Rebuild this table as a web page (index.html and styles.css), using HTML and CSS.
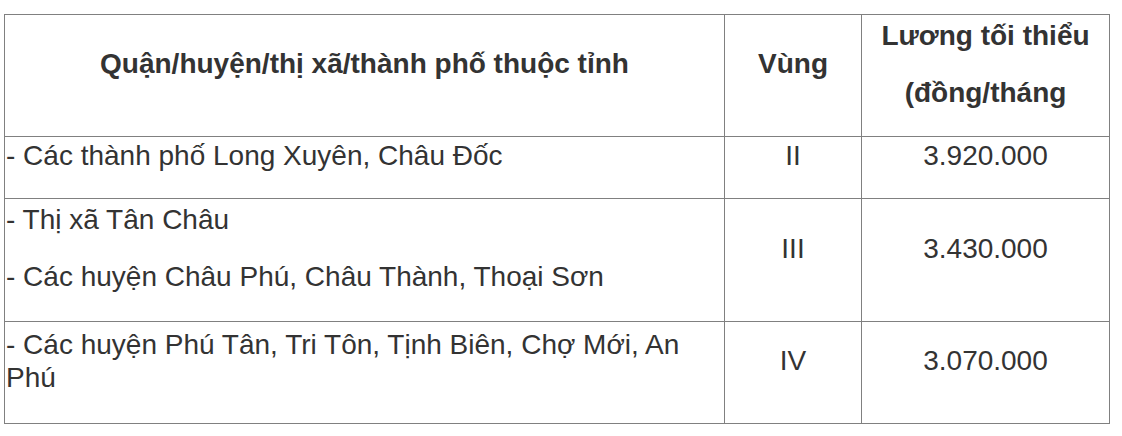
FILE: index.html
```html
<!DOCTYPE html>
<html lang="vi">
<head>
<meta charset="utf-8">
<title>Lương tối thiểu vùng</title>
<link rel="stylesheet" href="styles.css">
</head>
<body>
<div class="wrap">
<table class="wage">
<colgroup>
<col class="c1"><col class="c2"><col class="c3">
</colgroup>
<thead>
<tr class="r-head">
<th><p>Quận/huyện/thị xã/thành phố thuộc tỉnh</p></th>
<th><p>Vùng</p></th>
<th><p>Lương tối thiểu</p><p>(đồng/tháng</p></th>
</tr>
</thead>
<tbody>
<tr class="r1">
<td class="name"><p>- Các thành phố Long Xuyên, Châu Đốc</p></td>
<td class="mid"><p>II</p></td>
<td class="mid"><p>3.920.000</p></td>
</tr>
<tr class="r2">
<td class="name"><p>- Thị xã Tân Châu</p><p>- Các huyện Châu Phú, Châu Thành, Thoại Sơn</p></td>
<td class="mid"><p>III</p></td>
<td class="mid"><p>3.430.000</p></td>
</tr>
<tr class="r3">
<td class="name"><p>- Các huyện Phú Tân, Tri Tôn, Tịnh Biên, Chợ Mới, An Phú</p></td>
<td class="mid"><p>IV</p></td>
<td class="mid"><p>3.070.000</p></td>
</tr>
</tbody>
</table>
</div>
</body>
</html>
```
FILE: styles.css
```css
html, body {
  margin: 0;
  padding: 0;
  background: #ffffff;
}
.wrap {
  padding: 14px 0 0 4px;
}
.wage {
  border-collapse: collapse;
  table-layout: fixed;
  width: 1105px;
  font-family: "Liberation Sans", Arial, Helvetica, sans-serif;
  font-size: 28px;
  line-height: 33px;
  color: #333333;
}
.c1 { width: 720px; }
.c2 { width: 137px; }
.c3 { width: 248px; }
.wage th,
.wage td {
  border: 1px solid #808080;
  padding: 2px 1px;
  vertical-align: middle;
}
.wage th {
  font-weight: bold;
  text-align: center;
}
.wage p {
  margin: 0 0 24px 0;
}
.wage td.name {
  text-align: left;
}
.wage td.mid {
  text-align: center;
}
.r-head { height: 122px; }
.r1 { height: 62px; }
.r2 { height: 123px; }
.r3 { height: 102px; }
```
